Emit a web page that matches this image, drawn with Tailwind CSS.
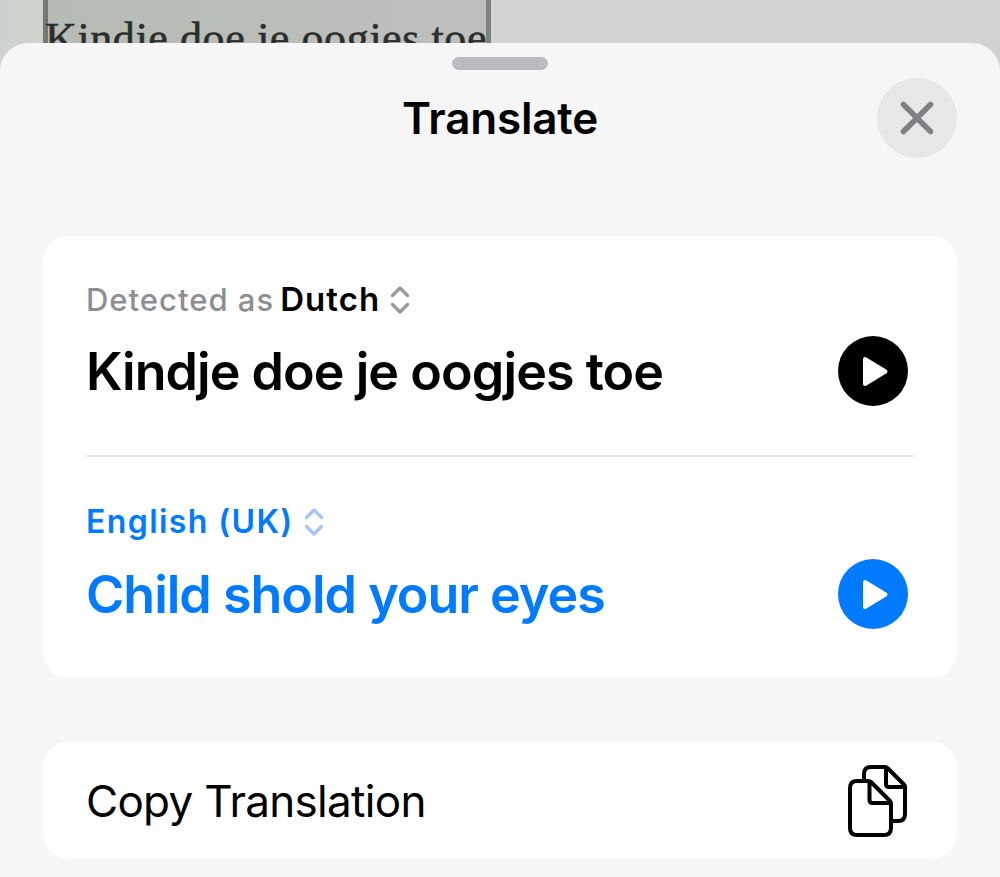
<!DOCTYPE html>
<html lang="en">
<head>
  <meta charset="UTF-8">
  <meta name="viewport" content="width=device-width, initial-scale=1.0">
  <title>Translate</title>
  <script src="https://cdn.jsdelivr.net/npm/@tailwindcss/browser@4"></script>
</head>
<body class="bg-[#cfd2ce] font-['Inter',sans-serif] text-black h-[877px] overflow-hidden">
  <!-- Page behind the sheet -->
  <div class="h-[43px] pl-[43px] bg-linear-to-r from-[#cbd1cc] to-[#d1d4d0] to-10%">
    <p class="w-[448px] h-[75px] pt-[13px] bg-linear-to-r from-[#b7bbb6] to-[#bdc0bc] border-l-5 border-r-5 border-l-[#717972] border-r-[#7d827e] font-['Liberation_Serif',serif] text-[44px] leading-[52px] tracking-[0.6px] text-[#2b2f2b] whitespace-nowrap [-webkit-text-stroke:0.6px_#2b2f2b]"><span class="-ml-[3px]">Kindje doe je oogjes toe</span></p>
  </div>

  <!-- Sheet -->
  <main class="relative h-[834px] bg-[#f6f6f6] rounded-t-[28px] px-[43px] pt-3.5">
    <div class="w-24 h-[13px] mx-auto rounded-full bg-[#bcbcc0]"></div>

    <header class="grid grid-cols-[80px_1fr_80px] items-center mt-2 h-20">
      <h1 class="col-start-2 text-center text-[44px] leading-none font-semibold tracking-[-0.2px]">Translate</h1>
      <button class="size-20 rounded-full bg-[#e7e7ea] flex items-center justify-center" aria-label="Close">
        <svg class="size-10" viewBox="0 0 40 40" fill="none" stroke="#808084" stroke-width="5.6" stroke-linecap="round"><path d="M6.500 6.500 33.500 33.500M33.500 6.500 6.500 33.500"/></svg>
      </button>
    </header>

    <!-- Source and translation -->
    <section class="mt-[78px] h-[442px] bg-white rounded-[26px] px-[43px]">
      <div class="h-[221px] pt-11 border-b-2 border-[#e6e6e7]">
        <div class="flex items-center h-10 text-[31px] leading-10">
          <span class="font-medium text-[#8e8e92] tracking-[1px]">Detected as</span>
          <span class="ml-1.5 -mt-0.5 text-[33px] font-semibold tracking-[1.1px]">Dutch</span>
          <svg class="ml-2.5 w-5 h-7" viewBox="0 0 20 28" fill="none" stroke="#9a9a9d" stroke-width="3.2" stroke-linecap="round" stroke-linejoin="round"><path d="M2.500 9.500 10 2l7.500 7.500M2.500 18.500 10 26l7.500-7.500"/></svg>
        </div>
        <div class="flex items-center justify-between mt-4 h-[70px] pr-1.5">
          <p class="pt-px text-[52px] leading-[60px] font-semibold tracking-[-0.97px] whitespace-nowrap">Kindje doe je oogjes toe</p>
          <svg class="size-[70px]" viewBox="0 0 70 70"><circle cx="35" cy="35" r="35" fill="#000"/><path d="M27 23v25l20.500-12.500Z" fill="#fff" stroke="#fff" stroke-width="4" stroke-linejoin="round"/></svg>
        </div>
      </div>
      <div class="pt-[45px] text-[#007aff]">
        <div class="flex items-center h-10 text-[32px] leading-10">
          <span class="font-semibold tracking-[1.4px]">English (UK)</span>
          <svg class="ml-2.5 w-5 h-7" viewBox="0 0 20 28" fill="none" stroke="#a3c6f5" stroke-width="3.2" stroke-linecap="round" stroke-linejoin="round"><path d="M2.500 9.500 10 2l7.500 7.500M2.500 18.500 10 26l7.500-7.500"/></svg>
        </div>
        <div class="flex items-center justify-between mt-[17px] h-[70px] pr-1.5">
          <p class="pt-0.5 text-[52px] leading-[60px] font-semibold tracking-[-1px] whitespace-nowrap">Child shold your eyes</p>
          <svg class="size-[70px]" viewBox="0 0 70 70"><circle cx="35" cy="35" r="35" fill="#007aff"/><path d="M27 23v25l20.500-12.500Z" fill="#fff" stroke="#fff" stroke-width="4" stroke-linejoin="round"/></svg>
        </div>
      </div>
    </section>

    <!-- Copy action -->
    <section class="mt-[64px] h-[117px] bg-white rounded-[26px] pl-[43px] pr-[49px] flex items-center justify-between">
      <span class="text-[44px] leading-none tracking-[-0.7px]">Copy Translation</span>
      <svg class="w-[60px] h-[72px]" viewBox="0 0 60 72" fill="none" stroke="#000" stroke-width="4" stroke-linecap="round" stroke-linejoin="round"><path d="M16 15V9q0-7 7-7h14q1.500 0 3 1.500L55.500 19q1.500 1.500 1.500 3v27q0 7-7 7h-5M38 3v16q0 3 3 3h15"/><path d="M9 16h11q2 0 3 1L42 36q1 1 1 3v24q0 7-7 7H9q-7 0-7-7V23q0-7 7-7ZM21.500 17v18q0 3 3 3h17"/></svg>
    </section>
  </main>
</body>
</html>
